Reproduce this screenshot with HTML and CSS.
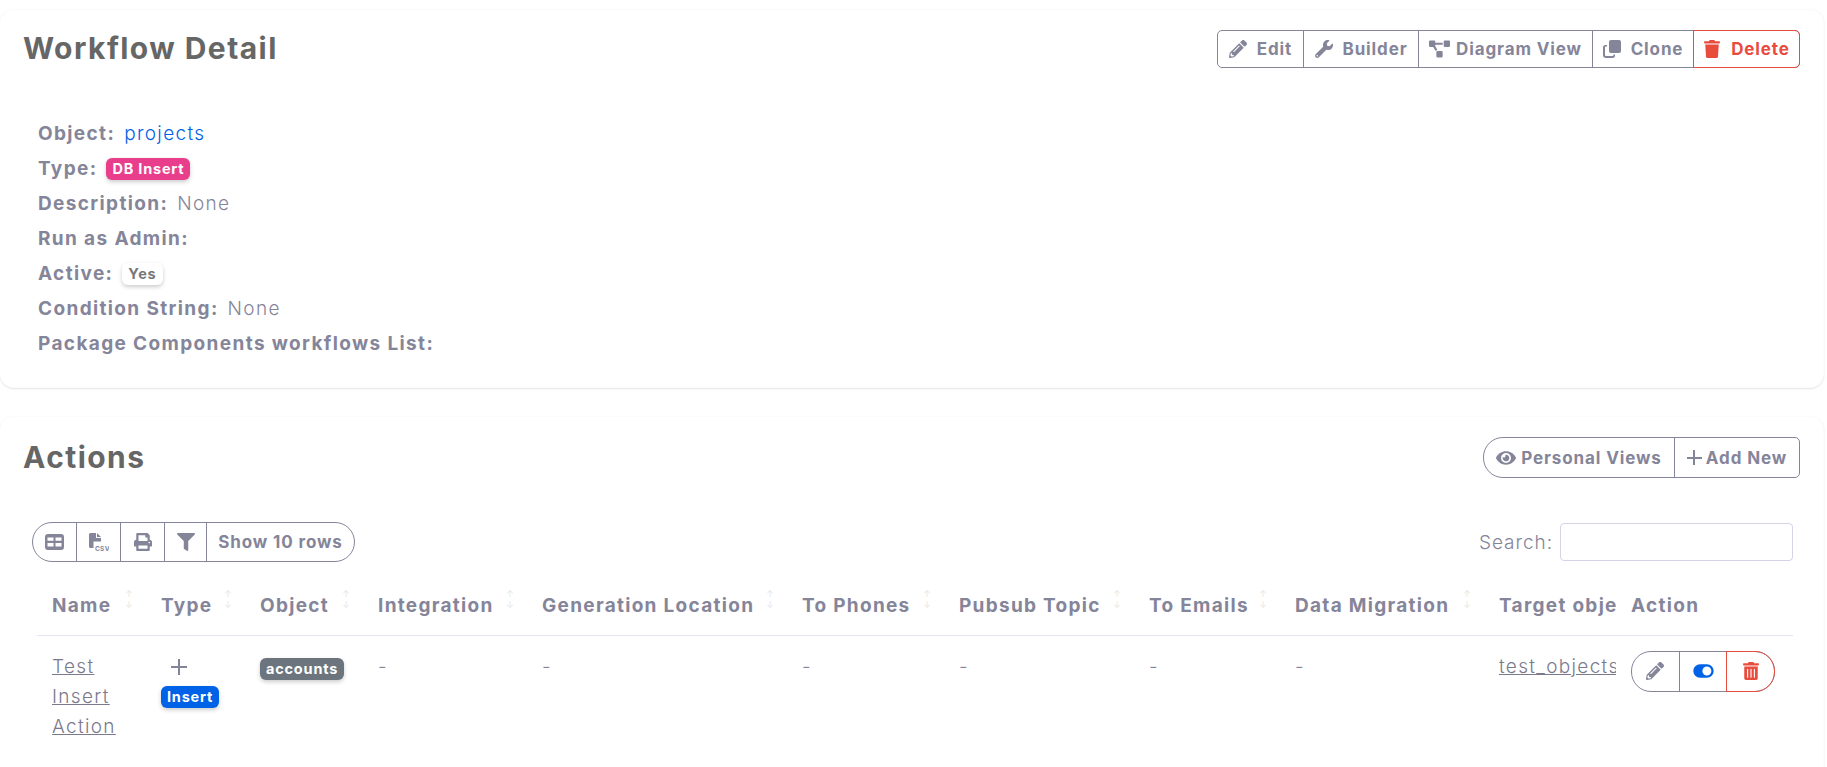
FILE: index.html
```html
<!DOCTYPE html>
<html lang="en">

<head>
    <meta charset="UTF-8">
    <meta name="viewport" content="width=device-width, initial-scale=1.0">
    <title>Workflow Detail</title>
    <link rel="stylesheet" href="styles.css">
</head>

<body>
    <svg class="iconDefs" width="0" height="0">
        <symbol id="iPencil" viewBox="0 0 512 512"><path d="M497.9 142.1l-46.1 46.1c-4.7 4.7-12.3 4.7-17 0l-111-111c-4.7-4.7-4.7-12.3 0-17l46.1-46.1c18.7-18.7 49.1-18.7 67.9 0l60.1 60.1c18.8 18.7 18.8 49.1 0 67.9zM284.2 99.8L21.6 362.4.4 483.9c-2.9 16.4 11.4 30.6 27.8 27.8l121.5-21.3 262.6-262.6c4.7-4.7 4.7-12.3 0-17l-111-111c-4.8-4.7-12.4-4.7-17.1 0zM124.1 339.9c-5.5-5.5-5.5-14.3 0-19.8l154-154c5.5-5.5 14.3-5.5 19.8 0s5.5 14.3 0 19.8l-154 154c-5.5 5.5-14.3 5.5-19.8 0zM88 424h48v36.3l-64.5 11.3-31.1-31.1L51.7 376H88v48z"/></symbol>
        <symbol id="iWrench" viewBox="0 0 512 512"><path d="M507.73 109.1c-2.24-9.03-13.54-12.09-20.12-5.51l-74.36 74.36-67.88-11.31-11.31-67.88 74.36-74.36c6.62-6.62 3.43-17.9-5.66-20.16-47.38-11.74-99.55.91-136.58 37.93-39.64 39.64-50.55 97.1-34.05 147.2L18.74 402.76c-24.99 24.99-24.99 65.51 0 90.5 24.99 24.99 65.51 24.99 90.5 0l213.21-213.21c50.12 16.71 107.47 5.68 147.37-34.22 37.07-37.07 49.7-89.32 37.91-136.73zM64 472c-13.25 0-24-10.75-24-24 0-13.26 10.75-24 24-24s24 10.74 24 24c0 13.25-10.75 24-24 24z"/></symbol>
        <symbol id="iDiagram" viewBox="0 0 640 512"><path d="M384 320H256c-17.67 0-32 14.33-32 32v128c0 17.67 14.33 32 32 32h128c17.67 0 32-14.33 32-32V352c0-17.67-14.33-32-32-32zM192 32c0-17.67-14.33-32-32-32H32C14.33 0 0 14.33 0 32v128c0 17.67 14.33 32 32 32h95.72l73.16 128.04C211.98 300.98 232.4 288 256 288h.28L192 175.51V128h224V64H192V32zM608 0H480c-17.67 0-32 14.33-32 32v128c0 17.67 14.33 32 32 32h128c17.67 0 32-14.33 32-32V32c0-17.67-14.33-32-32-32z"/></symbol>
        <symbol id="iClone" viewBox="0 0 18 18"><rect x="6" y="0" width="12" height="13" rx="2"/><path d="M4 5v1.6H3a1 1 0 0 0-1 1V15a1 1 0 0 0 1 1h6.5a1 1 0 0 0 1-1v-.4H12V15a2.6 2.6 0 0 1-2.5 3H3a3 3 0 0 1-3-3V7.600A2.600 2.600 0 0 1 3 5z"/></symbol>
        <symbol id="iTrash" viewBox="0 0 448 512"><path d="M432 32H312l-9.4-18.7A24 24 0 0 0 281.1 0H166.8a23.72 23.72 0 0 0-21.4 13.3L136 32H16A16 16 0 0 0 0 48v32a16 16 0 0 0 16 16h416a16 16 0 0 0 16-16V48a16 16 0 0 0-16-16zM53.2 467a48 48 0 0 0 47.9 45h245.8a48 48 0 0 0 47.9-45L416 128H32z"/></symbol>
        <symbol id="iTrashAlt" viewBox="0 0 448 512"><path d="M32 464a48 48 0 0 0 48 48h288a48 48 0 0 0 48-48V128H32zm272-256a16 16 0 0 1 32 0v224a16 16 0 0 1-32 0zm-96 0a16 16 0 0 1 32 0v224a16 16 0 0 1-32 0zm-96 0a16 16 0 0 1 32 0v224a16 16 0 0 1-32 0zM432 32H312l-9.4-18.7A24 24 0 0 0 281.1 0H166.8a23.72 23.72 0 0 0-21.4 13.3L136 32H16A16 16 0 0 0 0 48v32a16 16 0 0 0 16 16h416a16 16 0 0 0 16-16V48a16 16 0 0 0-16-16z"/></symbol>
        <symbol id="iEye" viewBox="0 0 576 512"><path d="M572.52 241.4C518.29 135.59 410.93 64 288 64S57.68 135.64 3.48 241.41a32.35 32.35 0 0 0 0 29.19C57.71 376.41 165.07 448 288 448s230.32-71.64 284.52-177.41a32.35 32.35 0 0 0 0-29.19zM288 400a144 144 0 1 1 144-144 143.93 143.93 0 0 1-144 144zm0-240a95.31 95.31 0 0 0-25.31 3.79 47.85 47.85 0 0 1-66.9 66.9A95.78 95.78 0 1 0 288 160z"/></symbol>
        <symbol id="iPrint" viewBox="0 0 512 512"><path d="M448 192V77.25c0-8.49-3.37-16.62-9.37-22.63L393.37 9.37c-6-6-14.14-9.37-22.63-9.37H96C78.33 0 64 14.33 64 32v160c-35.35 0-64 28.65-64 64v112c0 8.84 7.16 16 16 16h48v96c0 17.67 14.33 32 32 32h320c17.67 0 32-14.33 32-32v-96h48c8.84 0 16-7.16 16-16V256c0-35.35-28.65-64-64-64zm-64 256H128v-96h256v96zm0-224H128V64h192v48c0 8.84 7.16 16 16 16h48v96zm48 72c-13.25 0-24-10.75-24-24 0-13.27 10.75-24 24-24s24 10.73 24 24c0 13.25-10.75 24-24 24z"/></symbol>
        <symbol id="iFilter" viewBox="0 0 512 512"><path d="M487.976 0H24.028C2.71 0-8.047 25.866 7.058 40.971L192 225.941V432c0 7.831 3.821 15.17 10.237 19.662l80 55.98C298.02 518.69 320 507.493 320 487.98V225.941l184.947-184.97C520.021 25.896 509.338 0 487.976 0z"/></symbol>
        <symbol id="iToggle" viewBox="0 0 576 512"><path d="M384 64H192C86 64 0 150 0 256s86 192 192 192h192c106 0 192-86 192-192S490 64 384 64zm0 320c-70.800 0-128-57.300-128-128 0-70.800 57.300-128 128-128 70.800 0 128 57.300 128 128 0 70.800-57.300 128-128 128z"/></symbol>
        <symbol id="iTable" viewBox="0 0 19 16"><path fill-rule="evenodd" d="M3 0h13a3 3 0 0 1 3 3v10a3 3 0 0 1-3 3H3a3 3 0 0 1-3-3V3a3 3 0 0 1 3-3zM2.500 3.500v3.300h6V3.500zm8 0v3.300h6V3.500zm-8 5.500v3.500h6V9zm8 0v3.500h6V9z"/></symbol>
    </svg>

    <div class="card detailCard">
        <div class="cardHead">
            <h2 class="cardTitle">Workflow Detail</h2>
            <div class="btnGroup">
                <a class="btn btnEdit"><svg class="icon"><use href="#iPencil"/></svg>Edit</a>
                <a class="btn btnBuilder"><svg class="icon"><use href="#iWrench"/></svg>Builder</a>
                <a class="btn btnDiagram"><svg class="icon iconWide"><use href="#iDiagram"/></svg>Diagram View</a>
                <a class="btn btnClone"><svg class="icon"><use href="#iClone"/></svg>Clone</a>
                <a class="btn btnDelete"><svg class="icon"><use href="#iTrash"/></svg>Delete</a>
            </div>
        </div>
        <div class="detailList">
            <div class="detailRow"><b>Object:</b><a class="objLink">projects</a></div>
            <div class="detailRow"><b>Type:</b><span class="badge badgePink">DB Insert</span></div>
            <div class="detailRow"><b>Description:</b><span>None</span></div>
            <div class="detailRow"><b>Run as Admin:</b></div>
            <div class="detailRow"><b>Active:</b><span class="badge badgeLight">Yes</span></div>
            <div class="detailRow"><b>Condition String:</b><span>None</span></div>
            <div class="detailRow"><b>Package Components workflows List:</b></div>
        </div>
    </div>

    <div class="card actionsCard">
        <div class="cardHead actionsHead">
            <h2 class="cardTitle">Actions</h2>
            <div class="btnGroup roundLeft">
                <a class="btn btnViews"><svg class="icon iconEye"><use href="#iEye"/></svg>Personal Views</a>
                <a class="btn btnAdd"><span class="plus"></span>Add New</a>
            </div>
        </div>

        <div class="tableTools">
            <div class="btnGroup pill">
                <a class="btn toolBtn"><svg class="icon iconTable"><use href="#iTable"/></svg></a>
                <a class="btn toolBtn">
                    <svg class="iconCsv" viewBox="0 0 20 19">
                        <path d="M1.500 0H7v5h5v3.500H4.500V15h-3A1.500 1.500 0 0 1 0 13.500v-12A1.500 1.500 0 0 1 1.500 0zM8 0l4 4H8z"/>
                        <text x="6" y="17.500" class="csvText">CSV</text>
                    </svg>
                </a>
                <a class="btn toolBtn"><svg class="icon iconPrint"><use href="#iPrint"/></svg></a>
                <a class="btn toolBtn"><svg class="icon iconPrint"><use href="#iFilter"/></svg></a>
                <a class="btn toolRows">Show 10 rows</a>
            </div>
            <label class="searchBox">Search:<input class="searchInput" type="search"></label>
        </div>

        <table class="dataTable">
            <thead>
                <tr>
                    <th class="sortable">Name</th>
                    <th class="sortable">Type</th>
                    <th class="sortable">Object</th>
                    <th class="sortable">Integration</th>
                    <th class="sortable">Generation Location</th>
                    <th class="sortable">To Phones</th>
                    <th class="sortable">Pubsub Topic</th>
                    <th class="sortable">To Emails</th>
                    <th class="sortable">Data Migration</th>
                    <th>Target object</th>
                    <th>Action</th>
                </tr>
            </thead>
            <tbody>
                <tr>
                    <td class="nameCell"><a class="rowLink">Test Insert Action</a></td>
                    <td>
                        <span class="plus plusType"></span>
                        <span class="badge badgeBlue">Insert</span>
                    </td>
                    <td><span class="badge badgeGray">accounts</span></td>
                    <td>-</td>
                    <td>-</td>
                    <td>-</td>
                    <td>-</td>
                    <td>-</td>
                    <td>-</td>
                    <td><a class="rowLink">test_objects</a></td>
                    <td>
                        <div class="btnGroup pill rowBtns">
                            <a class="btn rowBtn"><svg class="icon"><use href="#iPencil"/></svg></a>
                            <a class="btn rowBtn"><svg class="icon iconToggle"><use href="#iToggle"/></svg></a>
                            <a class="btn rowBtn rowDelete"><svg class="icon"><use href="#iTrashAlt"/></svg></a>
                        </div>
                    </td>
                </tr>
            </tbody>
        </table>
    </div>
</body>

</html>
```
FILE: styles.css
```css
html,
body {
    height: 767px;
    overflow: hidden;
}

body {
    margin: 0;
    padding-top: 9px;
    background-color: #fff;
    color: #85859a;
    font-family: Inter, "Open Sans", sans-serif;
    font-size: 19px;
    font-weight: 300;
    letter-spacing: 0.07em;
}

.iconDefs {
    display: block;
    position: absolute;
}

/* cards */

.card {
    box-sizing: border-box;
    margin-right: 3px;
    background-color: #fff;
    border: 1px solid #fbfbfb;
    border-left: none;
    border-radius: 14px;
    box-shadow: 0 1px 2px rgba(0, 0, 0, 0.1);
}

.detailCard {
    height: 379px;
    margin-bottom: 28px;
}

.actionsCard {
    height: 420px;
}

.cardHead {
    display: flex;
    justify-content: space-between;
    align-items: center;
    padding: 20px 23px 0 23px;
}

.cardTitle {
    margin: 0 0 2px;
    color: #666;
    font-size: 30px;
    font-weight: 700;
    letter-spacing: 0.048em;
}

/* button groups */

.btnGroup {
    display: flex;
    border: 1px solid #85859a;
    border-radius: 5px;
    background-color: #fff;
}

.btn {
    display: flex;
    align-items: center;
    justify-content: center;
    gap: 10px;
    box-sizing: border-box;
    color: #85859a;
    fill: #85859a;
    font-size: 17px;
    font-weight: 700;
    letter-spacing: 0.052em;
}

.btn + .btn {
    border-left: 1px solid #85859a;
}

.icon {
    width: 18px;
    height: 18px;
}

.iconWide {
    width: 21px;
}

.btnEdit {
    width: 85px;
    height: 36px;
}

.btnBuilder {
    width: 115px;
}

.btnDiagram {
    width: 174px;
    gap: 6px;
}

.btnClone {
    width: 101px;
}

.btnDelete {
    width: 107px;
    margin: -1px -1px -1px 0;
    border: 1px solid #e84c3d;
    border-radius: 0 5px 5px 0;
    color: #e84c3d;
    fill: #e84c3d;
}

.btn + .btnDelete {
    border-left: 1px solid #e84c3d;
}

.roundLeft {
    border-radius: 20px 5px 5px 20px;
}

.btnViews {
    width: 190px;
    height: 39px;
    gap: 5px;
}

.iconEye {
    width: 20px;
}

.btnAdd {
    width: 125px;
    gap: 4px;
}

.plus {
    display: inline-block;
    width: 15px;
    height: 15px;
    background:
        linear-gradient(#85859a, #85859a) center / 100% 2px no-repeat,
        linear-gradient(#85859a, #85859a) center / 2px 100% no-repeat;
}

/* detail rows */

.detailList {
    margin-top: 48px;
    padding-left: 38px;
}

.detailRow {
    display: flex;
    align-items: center;
    gap: 9px;
    height: 35px;
}

.detailRow b {
    font-weight: 700;
    letter-spacing: 0.072em;
}

.objLink {
    color: #0062e6;
}

.badge {
    display: inline-block;
    padding: 0 6px;
    border-radius: 6px;
    box-shadow: 0 2px 4px rgba(0, 0, 0, 0.2);
    font-size: 14.5px;
    font-weight: 700;
    letter-spacing: 0.055em;
    line-height: 22px;
    color: #fff;
}

.badgePink {
    background-color: #e83e8c;
}

.badgeLight {
    background-color: #fff;
    color: #777;
}

.badgeBlue {
    background-color: #0062e6;
}

.badgeGray {
    background-color: #6c757d;
}

/* table tools */

.tableTools {
    display: flex;
    justify-content: space-between;
    align-items: center;
    margin-top: 44px;
    padding: 0 30px 0 32px;
}

.pill {
    border-radius: 20px;
}

.toolBtn {
    width: 44px;
    height: 38px;
}

.toolBtn:first-child {
    width: 43px;
}

.toolBtn:nth-child(4) {
    width: 42px;
}

.iconTable {
    width: 19px;
    height: 16px;
}

.iconPrint {
    width: 18px;
    height: 18px;
}

.iconCsv {
    width: 20px;
    height: 19px;
}

.csvText {
    font-size: 6.5px;
    font-weight: 700;
    letter-spacing: 0.3px;
}

.toolRows {
    width: 148px;
}

.searchBox {
    display: flex;
    align-items: center;
    gap: 7px;
    letter-spacing: 0.05em;
}

.searchInput {
    box-sizing: border-box;
    width: 233px;
    height: 38px;
    border: 1px solid #d5d3e8;
    border-radius: 4px;
    background-color: #fff;
}

/* table */

.dataTable {
    table-layout: fixed;
    border-collapse: collapse;
    width: 1756px;
    margin: 13px 0 0 37px;
}

.dataTable th,
.dataTable td {
    overflow: hidden;
    padding: 0 0 0 15px;
    text-align: left;
    vertical-align: top;
}

.dataTable th {
    position: relative;
    box-sizing: border-box;
    height: 60px;
    padding-top: 2px;
    border-bottom: 1px solid #e5e4f2;
    font-weight: 700;
    vertical-align: middle;
    white-space: nowrap;
    letter-spacing: 0.068em;
}

.dataTable td {
    padding-top: 16px;
    line-height: 30px;
}

.dataTable .nameCell {
    padding-right: 15px;
}

.sortable::after {
    content: "\2191\A\2193";
    position: absolute;
    top: 13px;
    right: 12px;
    color: #e6e6e6;
    font-size: 9px;
    font-weight: 400;
    line-height: 11px;
    white-space: pre;
}

.dataTable th:nth-child(1) { width: 109px; }
.dataTable th:nth-child(2) { width: 99px; }
.dataTable th:nth-child(3) { width: 118px; }
.dataTable th:nth-child(4) { width: 164px; }
.dataTable th:nth-child(5) { width: 260px; }
.dataTable th:nth-child(6) { width: 157px; }
.dataTable th:nth-child(7) { width: 190px; }
.dataTable th:nth-child(8) { width: 146px; }
.dataTable th:nth-child(9) { width: 204px; }
.dataTable th:nth-child(10) { width: 132px; }

.rowLink {
    color: #7a7a8c;
    text-decoration: underline;
}

.plusType {
    display: block;
    width: 16px;
    height: 16px;
    margin: 7px 0 11px 10px;
}

.badgeBlue,
.badgeGray {
    vertical-align: top;
}

.badgeGray {
    margin-top: 6px;
    margin-bottom: 6px;
}

.rowBtns {
    width: 142px;
    height: 39px;
    margin-top: -1px;
}

.rowBtn {
    flex: 1;
}

.iconToggle {
    width: 21px;
    fill: #0062e6;
}

.rowDelete {
    margin: -1px -1px -1px 0;
    border: 1px solid #e84c3d;
    border-radius: 0 20px 20px 0;
    fill: #e84c3d;
}

.btn + .rowDelete {
    border-left: 1px solid #e84c3d;
}
```
